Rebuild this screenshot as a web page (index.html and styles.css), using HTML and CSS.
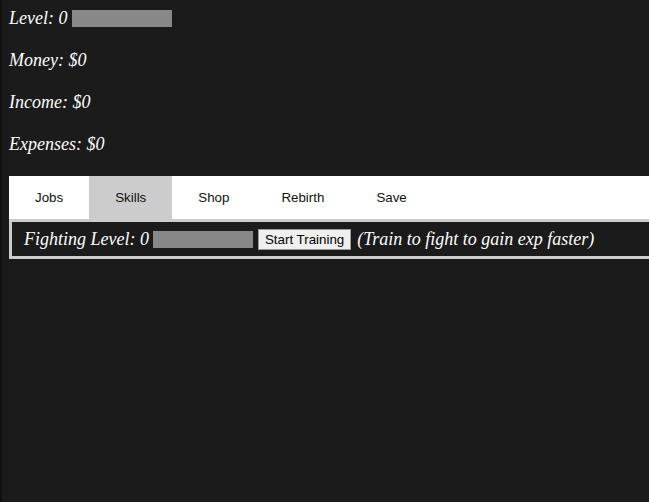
FILE: index.html
```html
<!DOCTYPE html>
<html>
<head>
<meta charset="utf-8">
<link rel="stylesheet" href="styles.css">
</head>
<body>
<div class="page">
  <div class="stats">
    <div class="stat">Level: 0 <span class="bar"></span></div>
    <div class="stat">Money: $0</div>
    <div class="stat">Income: $0</div>
    <div class="stat">Expenses: $0</div>
  </div>
  <nav class="tabs">
    <div class="tab">Jobs</div>
    <div class="tab active">Skills</div>
    <div class="tab">Shop</div>
    <div class="tab">Rebirth</div>
    <div class="tab">Save</div>
  </nav>
  <div class="skill">
    <span class="skill-name">Fighting Level: 0</span>
    <span class="bar"></span>
    <button class="train">Start Training</button>
    <span class="hint">(Train to fight to gain exp faster)</span>
  </div>
</div>
</body>
</html>
```
FILE: styles.css
```css
html, body {
  margin: 0;
  height: 100%;
  background: #1b1b1b;
}
body {
  font-family: "Liberation Serif", "Times New Roman", serif;
  font-style: italic;
  font-size: 18px;
  color: #fff;
}
.page {
  box-sizing: border-box;
  min-height: 100%;
  border-left: 2px solid #111;
  padding-left: 7px;
}
.stats {
  display: flex;
  flex-direction: column;
  gap: 22px;
  padding-top: 8px;
}
.stat {
  height: 20px;
  line-height: 20px;
  display: flex;
  align-items: center;
  white-space: pre;
}
.bar {
  display: inline-block;
  width: 100px;
  height: 17px;
  background: #888;
}
.stat .bar {
  margin-left: 0;
}
.tabs {
  margin-top: 22px;
  height: 43px;
  background: #fff;
  display: flex;
}
.tab {
  font-family: "Liberation Sans", Arial, sans-serif;
  font-style: normal;
  font-size: 13.33px;
  color: #111;
  padding: 0 26px;
  display: flex;
  align-items: center;
}
.tab.active {
  background: #ccc;
}
.skill {
  height: 34px;
  border: 3px solid #ccc;
  border-right: none;
  display: flex;
  align-items: center;
  padding-left: 12px;
  white-space: nowrap;
}
.skill-name {
  margin-right: 4px;
}
.train {
  margin: 0 5px;
  font-family: "Liberation Sans", Arial, sans-serif;
  font-size: 13.33px;
  font-style: normal;
  color: #000;
  background: #efefef;
  border: 1px solid #9a9a9a;
  padding: 1px 6px;
  height: 21px;
}
.hint {
  margin-left: 1px;
}
```
